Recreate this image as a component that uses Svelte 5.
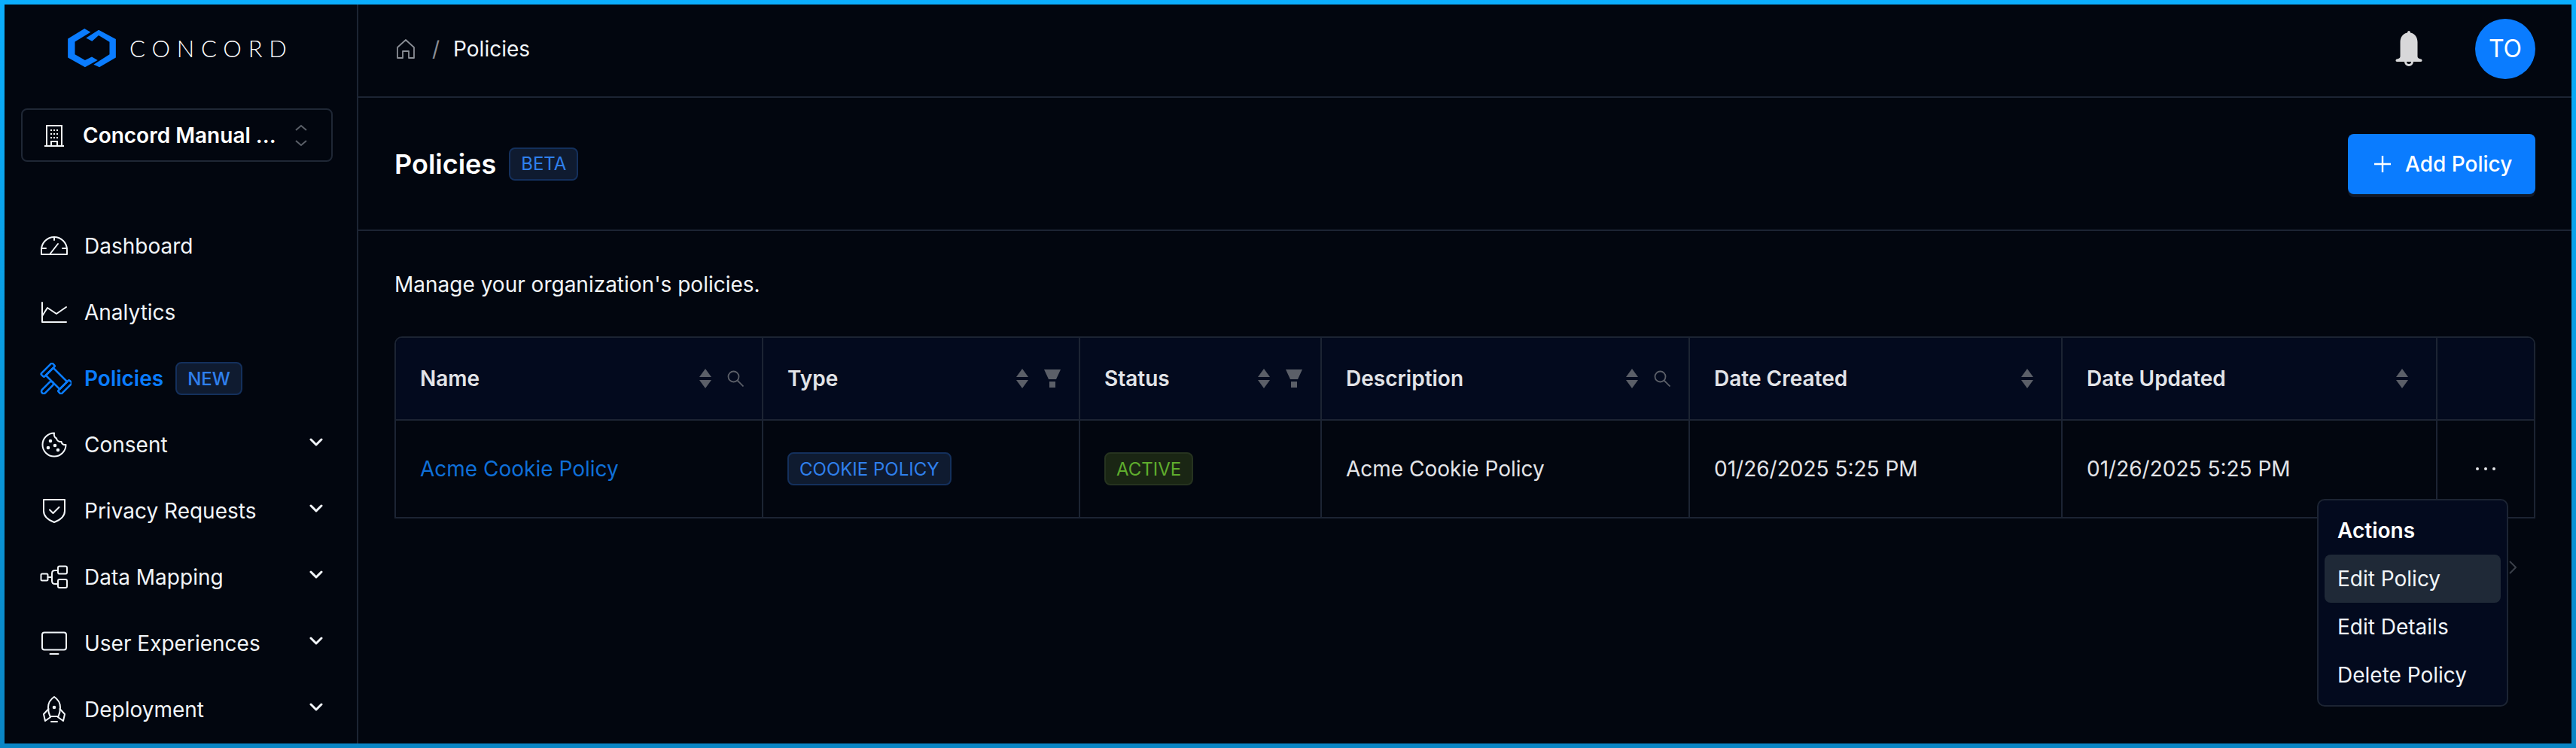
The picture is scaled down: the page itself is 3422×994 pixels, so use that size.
<script lang="ts">
  const ic = `fill="none" stroke="#f1f5f9" stroke-width="2" stroke-linecap="round" stroke-linejoin="round"`;
  const icons: Record<string, string> = {
    dashboard: `<svg width="38" height="26" viewBox="0 0 38 26" ${ic}><path d="M2 24v-6a17 17 0 0 1 34 0v6z"/><path d="M19 1v4M2 16h6M30 16h6M13 24l11-14"/></svg>`,
    analytics: `<svg width="38" height="30" viewBox="0 0 38 30" ${ic}><path d="M3 2v26h32"/><path d="M3 20l7-11 12 8 13-9"/></svg>`,
    consent: `<svg width="38" height="34" viewBox="0 0 38 34" ${ic}><path d="M19 1.500a15.500 15.500 0 1 0 15.500 15.500c-3 .5-5.500-1-6-4-3.500.5-6-1.500-6.500-4.500-2.500-1-3.500-4-3-7z"/><circle cx="14" cy="12" r="1.300" fill="#f1f5f9"/><circle cx="11" cy="21" r="1.300" fill="#f1f5f9"/><circle cx="20" cy="18" r="1.300" fill="#f1f5f9"/><circle cx="24" cy="24" r="1.300" fill="#f1f5f9"/></svg>`,
    privacy: `<svg width="38" height="34" viewBox="0 0 38 34" ${ic}><path d="M5 2h28v15c0 7-6 12-14 15C11 29 5 24 5 17z"/><path d="M13 15.500l4.500 4.500 8-8"/></svg>`,
    mapping: `<svg width="38" height="32" viewBox="0 0 38 32" ${ic}><rect x="1.500" y="11.500" width="9" height="9" rx="1.500"/><rect x="24" y="1.500" width="12" height="10" rx="2"/><rect x="24" y="19" width="12" height="11" rx="2"/><path d="M10.500 16h5M24 7h-4c-2.500 0-4 1.500-4 4v10c0 2.500 1.500 4 4 4h4"/></svg>`,
    experiences: `<svg width="38" height="32" viewBox="0 0 38 32" ${ic}><rect x="3" y="1.500" width="32" height="23" rx="3"/><path d="M13.500 30h11"/></svg>`,
    deployment: `<svg width="38" height="36" viewBox="0 0 38 36" ${ic}><path d="M19 1c6 4 8 10 8 14 0 5-1 9-2.500 12h-11C12 24 11 20 11 15c0-4 2-10 8-14z"/><path d="M11.500 17L5 24l2 9 7-5M26.500 17l6.500 7-2 9-7-5M15 34h8"/><circle cx="19" cy="15" r="1.300" fill="#f1f5f9"/></svg>`,
  };

  const nav = [
    { label: 'Dashboard', icon: 'dashboard' },
    { label: 'Analytics', icon: 'analytics' },
    { label: 'Policies', active: true, badge: 'NEW' },
    { label: 'Consent', icon: 'consent', more: true },
    { label: 'Privacy Requests', icon: 'privacy', more: true },
    { label: 'Data Mapping', icon: 'mapping', more: true },
    { label: 'User Experiences', icon: 'experiences', more: true },
    { label: 'Deployment', icon: 'deployment', more: true },
  ];

  const columns = [
    { label: 'Name', width: 488, tool: 'search' },
    { label: 'Type', width: 421, tool: 'filter' },
    { label: 'Status', width: 321, tool: 'filter' },
    { label: 'Description', width: 489, tool: 'search' },
    { label: 'Date Created', width: 495 },
    { label: 'Date Updated', width: 498 },
  ];
</script>

{#snippet sort()}
  <svg class="sort" width="18" height="28" viewBox="0 0 18 28" fill="#5b5f68"><path d="M9 1l8 11H1zM9 27L1 16h16z"/></svg>
{/snippet}

<div class="frame">
  <div class="shell">
    <aside class="sidebar">
      <div class="brand">
        <svg width="64" height="52" viewBox="210 55 190 155" fill="#0a7cff"><path d="M276 55l24 14-62 38v50l40 23 27-13 23 13-50 28-68-38V95z"/><path d="M282 92l50-32 68 37v73l-65 38-23-11 63-40v-49l-43-26-26 23z"/></svg>
        <span class="wordmark">CONCORD</span>
      </div>
      <div class="org">
        <svg width="28" height="30" viewBox="0 0 28 30" fill="none" stroke="#f1f5f9" stroke-width="2"><path d="M1 29h26M4 29V2h20v27M10 29v-6h8v6"/><path d="M9 8h2M13 8h2M17 8h2M9 13h2M13 13h2M17 13h2M9 18h2M13 18h2M17 18h2"/></svg>
        <span class="org-name">Concord Manual ...</span>
        <svg width="16" height="30" viewBox="0 0 16 30" fill="none" stroke="#5b6069" stroke-width="2"><path d="M1 8l7-6 7 6M1 22l7 6 7-6"/></svg>
      </div>
      <nav>
        {#each nav as item}
          <div class="nav-row" class:active={item.active}>
            <span class="nav-icon">
              {#if item.icon}
                {@html icons[item.icon]}
              {:else}
                <svg width="42" height="42" viewBox="0 0 42 42" fill="none" stroke="#0a7cff" stroke-width="2.600" stroke-linejoin="round"><g transform="translate(22 21) rotate(-45)"><rect x="-10.500" y="-19" width="21" height="6" rx="1.500"/><rect x="-10.500" y="13" width="21" height="6" rx="1.500"/><rect x="-7" y="-13" width="14" height="26"/><rect x="-27" y="-3" width="20" height="6" rx="3"/></g></svg>
              {/if}
            </span>
            <span>{item.label}</span>
            {#if item.badge}<span class="badge nav-badge">{item.badge}</span>{/if}
            {#if item.more}
              <svg class="caret" width="18" height="12" viewBox="0 0 18 12" fill="none" stroke="#f1f5f9" stroke-width="3" stroke-linecap="round" stroke-linejoin="round"><path d="M2 2l7 7 7-7"/></svg>
            {/if}
          </div>
        {/each}
      </nav>
    </aside>

    <main>
      <header class="topbar">
        <div class="crumbs">
          <svg width="24" height="26" viewBox="0 0 24 26" fill="none" stroke="#8a8e96" stroke-width="1.800" stroke-linejoin="round"><path d="M1 11L12 1l11 10v14H16v-9H8v9H1z"/></svg>
          <span class="slash">/</span>
          <span>Policies</span>
        </div>
        <div class="top-actions">
          <svg width="36" height="48" viewBox="0 0 36 48" fill="#d8d8da"><path d="M18 0c1.200 0 2 1 2 2.500 6 1.200 9.500 6 9.500 12.500v19c0 2 1.500 3 4.500 3.500 2 .3 2 3.500 0 3.500H24a6 6 0 0 1-12 0H2c-2 0-2-3.200 0-3.500C5 37 6.500 36 6.500 34V15C6.500 8.500 10 3.700 16 2.500 16 1 16.800 0 18 0zM15 41a3 3 0 0 0 6 0z"/></svg>
          <div class="avatar">TO</div>
        </div>
      </header>

      <section class="titlebar">
        <div class="title-left">
          <h1>Policies</h1>
          <span class="badge beta">BETA</span>
        </div>
        <button class="add">
          <svg width="24" height="24" viewBox="0 0 24 24" stroke="#fff" stroke-width="2.400"><path d="M12 1v22M1 12h22"/></svg>
          Add Policy
        </button>
      </section>

      <section class="content">
        <p class="intro">Manage your organization's policies.</p>

        <div class="table-wrap">
          <table>
            <colgroup>
              {#each columns as c}<col style="width:{c.width}px" />{/each}
              <col />
            </colgroup>
            <thead>
              <tr>
                {#each columns as c}
                  <th>
                    <div class="th-inner" class:plain={!c.tool}>
                      <span class="th-label">{c.label}</span>
                      {@render sort()}
                      {#if c.tool === 'search'}
                        <svg class="tool" width="22" height="22" viewBox="0 0 22 22" fill="none" stroke="#5b5f68" stroke-width="1.800"><circle cx="8.500" cy="8.500" r="7"/><path d="M13.500 13.500l8 8"/></svg>
                      {:else if c.tool === 'filter'}
                        <svg class="tool" width="22" height="26" viewBox="0 0 22 26" fill="#5b5f68"><path d="M0 1h22l-6 13H6zM7 17h8v8H7z"/></svg>
                      {/if}
                    </div>
                  </th>
                {/each}
                <th></th>
              </tr>
            </thead>
            <tbody>
              <tr>
                <td><span class="link">Acme Cookie Policy</span></td>
                <td><span class="badge">COOKIE POLICY</span></td>
                <td><span class="badge active">ACTIVE</span></td>
                <td>Acme Cookie Policy</td>
                <td>01/26/2025 5:25 PM</td>
                <td>01/26/2025 5:25 PM</td>
                <td><div class="dots"><i></i><i></i><i></i></div></td>
              </tr>
            </tbody>
          </table>

          <div class="menu">
            <div class="menu-item menu-title">Actions</div>
            <div class="menu-item hover">Edit Policy</div>
            <div class="menu-item">Edit Details</div>
            <div class="menu-item">Delete Policy</div>
          </div>
          <svg class="next" width="10" height="20" viewBox="0 0 10 20" fill="none" stroke="#3a3f49" stroke-width="2"><path d="M1 2l8 8-8 8"/></svg>
        </div>
      </section>
    </main>
  </div>
</div>

<style>
  :global(body) { margin: 0; background: #02060f; }
  .frame {
    width: 3422px; height: 994px; padding: 6px; box-sizing: border-box; overflow: hidden;
    background: linear-gradient(180deg, #0baefd 0%, #0a9bdf 50%, #0a85c4 100%);
    font-family: Inter, "Liberation Sans", sans-serif; font-size: 28px; color: #f1f5f9;
  }
  .shell { display: flex; height: 982px; background: #02060f; overflow: hidden; }

  .sidebar { width: 468px; flex: none; border-right: 2px solid #1c2433; }
  .brand { display: flex; align-items: center; height: 116px; padding-left: 84px; gap: 18px; box-sizing: border-box; }
  .wordmark { font-family: Lato, sans-serif; font-weight: 300; font-size: 31px; letter-spacing: 8.800px; color: #fff; }
  .org {
    display: flex; align-items: center; height: 71px; margin: 22px 22px 0; padding: 0 32px 0 28px;
    border: 2px solid #1f2735; border-radius: 8px; box-sizing: border-box; width: 414px;
  }
  .org-name { font-weight: 600; margin-left: 24px; flex: 1; color: #fff; white-space: nowrap; }
  nav { margin-top: 68px; }
  .nav-row { display: flex; align-items: center; height: 88px; padding-left: 47px; padding-right: 45px; }
  .nav-icon { width: 59px; display: flex; align-items: center; }
  .caret { margin-left: auto; margin-top: -6px; }
  .nav-row.active { color: #0a7cff; font-weight: 600; }

  .badge {
    display: inline-flex; align-items: center; height: 44px; padding: 0 14px; box-sizing: border-box;
    background: #0f1b30; border: 2px solid #14305c; border-radius: 8px;
    color: #2f80ed; font-size: 24px; font-weight: 400;
  }
  .nav-badge { margin-left: 16px; font-weight: 500; }
  .badge.active { background: #1a2614; border-color: #26331f; color: #5fad2d; }

  main { flex: 1; min-width: 0; }
  .topbar {
    display: flex; align-items: center; justify-content: space-between; height: 124px;
    padding: 0 48px 5px 51px; border-bottom: 2px solid #1c2433; box-sizing: border-box;
  }
  .crumbs { display: flex; align-items: center; }
  .slash { color: #8a8e96; margin: 0 18px 0 23px; }
  .top-actions { display: flex; align-items: center; gap: 70px; }
  .avatar {
    width: 80px; height: 80px; border-radius: 50%; background: #0a7cff; color: #fff; font-size: 32px;
    display: flex; align-items: center; justify-content: center;
  }

  .titlebar {
    display: flex; align-items: center; justify-content: space-between; height: 177px;
    padding: 0 48px; border-bottom: 2px solid #1c2433; box-sizing: border-box;
  }
  .title-left { display: flex; align-items: center; gap: 17px; }
  h1 { margin: 0; font-size: 36px; font-weight: 600; color: #fff; }
  .add {
    display: flex; align-items: center; gap: 18px; width: 249px; height: 80px; padding: 0 0 0 34px;
    background: #0a7cff; color: #fff; border: 0; border-radius: 8px; box-shadow: 0 4px 0 #111827;
    font: 500 28px Inter, sans-serif;
  }

  .content { padding: 0 48px; }
  .intro { margin: 54px 0 0; line-height: 34px; }

  .table-wrap { position: relative; margin-top: 52px; }
  table {
    width: 100%; table-layout: fixed; border-collapse: separate; border-spacing: 0;
    border: 2px solid #1c2433; border-radius: 10px 10px 0 0; box-sizing: border-box;
  }
  th, td { padding: 0 32px; text-align: left; border-right: 2px solid #1c2433; box-sizing: border-box; }
  th:last-child, td:last-child { border-right: 0; }
  th { height: 110px; background: #030a1e; border-bottom: 2px solid #1c2433; font-weight: 600; color: #e2e4e8; }
  td { height: 128px; color: #e2e4e8; font-weight: 400; }
  th:first-child { border-top-left-radius: 8px; }
  th:last-child { border-top-right-radius: 8px; }
  .th-inner { display: flex; align-items: center; gap: 20px; margin-right: -8px; }
  .th-inner.plain { margin-right: 4px; }
  .th-label { flex: 1; white-space: nowrap; }
  .link { color: #0f6fd8; }
  .dots { display: flex; justify-content: center; gap: 7px; }
  .dots i { width: 4px; height: 4px; border-radius: 50%; background: #e2e4e8; }

  .menu {
    position: absolute; top: 216px; left: 2554px; width: 254px; box-sizing: border-box;
    padding: 8px; background: #030a1e; border: 2px solid #1c2433; border-radius: 10px;
  }
  .menu-item { height: 64px; padding: 0 17px; display: flex; align-items: center; border-radius: 8px; color: #f1f5f9; }
  .menu-title { font-weight: 600; color: #fff; }
  .menu-item.hover { background: #1f2937; }
  .next { position: absolute; top: 297px; left: 2809px; }
</style>
